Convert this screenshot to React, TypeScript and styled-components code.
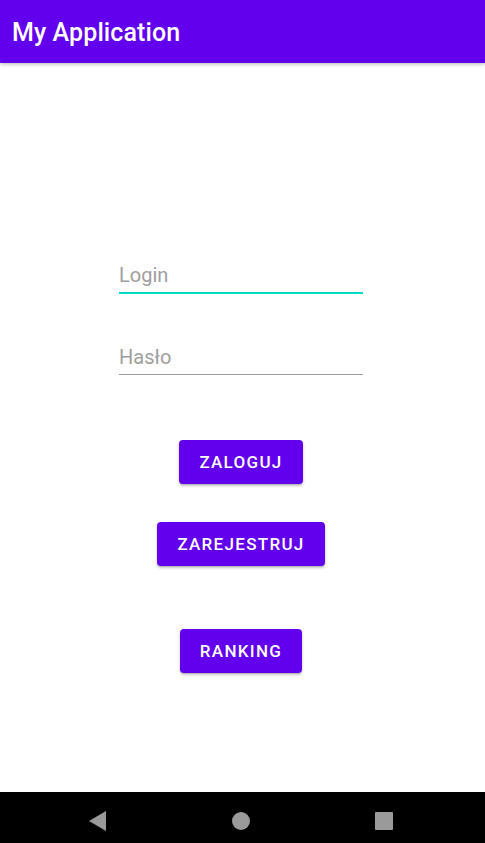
import React from "react";
import styled, { createGlobalStyle } from "styled-components";

const Global = createGlobalStyle`
  html, body { margin: 0; padding: 0; background: #ffffff; }
  body { font-family: Roboto, "Noto Sans", sans-serif; }
  * { box-sizing: border-box; }
`;

const Screen = styled.div`
  width: 485px;
  height: 843px;
  display: flex;
  flex-direction: column;
  background: #ffffff;
  overflow: hidden;
`;

const AppBar = styled.header`
  height: 63px;
  flex: none;
  background: #6200ee;
  display: flex;
  align-items: center;
  padding: 1px 12px 0;
  box-shadow: 0 1px 4px rgba(0, 0, 0, 0.3);
  position: relative;
  z-index: 1;
`;

const Title = styled.h1`
  margin: 0;
  font-family: Roboto, sans-serif;
  font-weight: 500;
  font-size: 25px;
  color: #ffffff;
  letter-spacing: 0.1px;
  line-height: 1;
`;

const Main = styled.main`
  flex: 1;
  display: flex;
  flex-direction: column;
  align-items: center;
  padding: 200px 3px 0 0;
`;

const Field = styled.div<{ $focused?: boolean; $gap: number }>`
  width: 244px;
  margin-top: ${(p) => p.$gap}px;
  padding-bottom: 5px;
  border-bottom: ${(p) => (p.$focused ? "2px solid #03dac5" : "1.4px solid #9b9b9b")};
  font-size: 20px;
  line-height: 24px;
  color: #9e9e9e;
  font-family: Roboto, sans-serif;
`;

const Button = styled.button<{ $gap: number }>`
  margin-top: ${(p) => p.$gap}px;
  height: 44px;
  padding: 0 20px;
  border: none;
  border-radius: 4px;
  background: #6200ee;
  color: #ffffff;
  font-family: Roboto, sans-serif;
  font-weight: 500;
  font-size: 17px;
  letter-spacing: 1.3px;
  text-transform: uppercase;
  box-shadow: 0 2px 3px rgba(0, 0, 0, 0.22), 0 1px 1px rgba(0, 0, 0, 0.12);
  cursor: pointer;
`;

const NavBar = styled.nav`
  height: 51px;
  flex: none;
  background: #000000;
  display: flex;
  align-items: center;
  justify-content: center;
  gap: 121px;
  padding: 6px 4px 0 0;
`;

const NavIcon = styled.svg`
  width: 22px;
  height: 22px;
  display: block;
`;

export default function App() {
  return (
    <>
      <Global />
      <Screen>
        <AppBar>
          <Title>My Application</Title>
        </AppBar>
        <Main>
          <Field $focused $gap={0}>Login</Field>
          <Field $gap={51}>Hasło</Field>
          <Button $gap={65}>Zaloguj</Button>
          <Button $gap={38}>Zarejestruj</Button>
          <Button $gap={63}>Ranking</Button>
        </Main>
        <NavBar>
          <NavIcon viewBox="0 0 22 22">
            <polygon points="19,1 19,21 2,11" fill="#9a9a9a" />
          </NavIcon>
          <NavIcon viewBox="0 0 22 22">
            <circle cx="11" cy="11" r="9" fill="#9a9a9a" />
          </NavIcon>
          <NavIcon viewBox="0 0 22 22">
            <rect x="2" y="2" width="18" height="18" rx="1" fill="#9a9a9a" />
          </NavIcon>
        </NavBar>
      </Screen>
    </>
  );
}
